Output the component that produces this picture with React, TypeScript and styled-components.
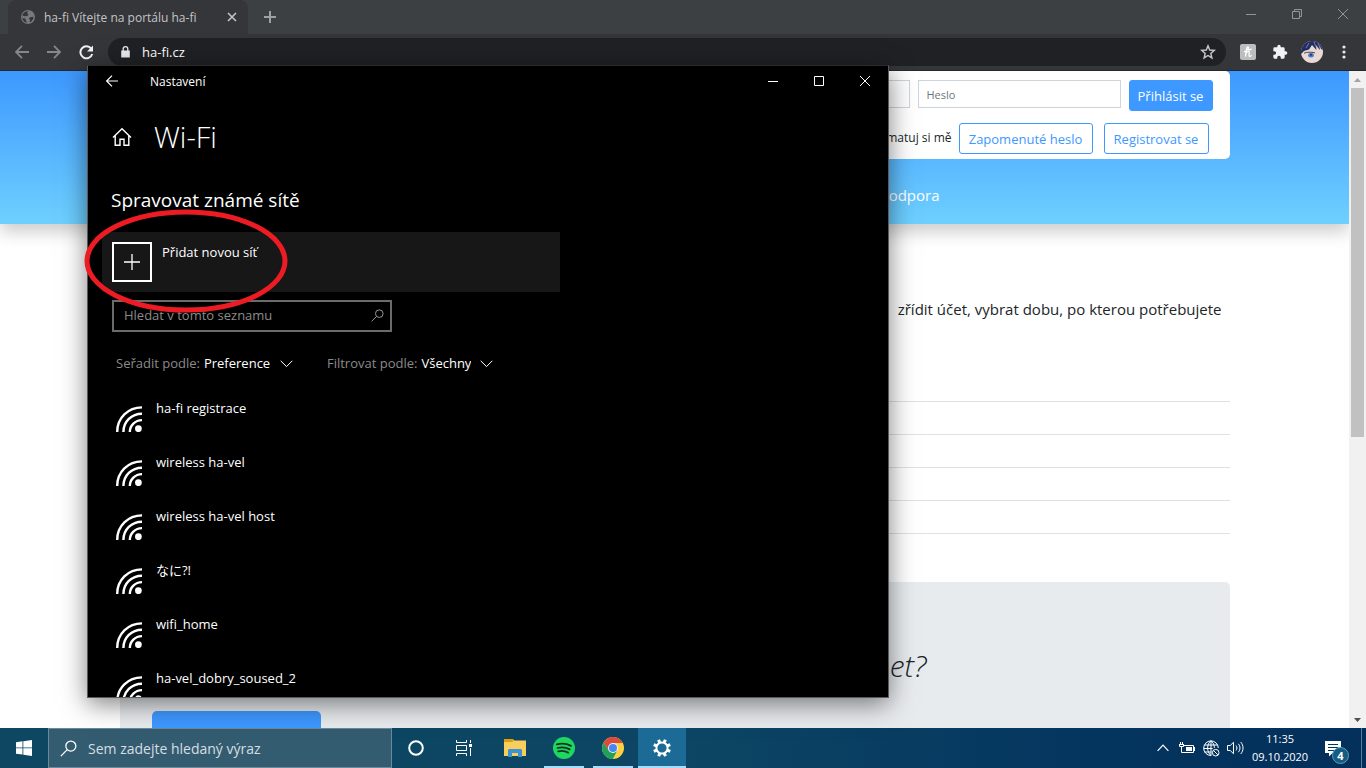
import React from "react";
import styled, { createGlobalStyle, css } from "styled-components";

const Global = createGlobalStyle`
  * { box-sizing: border-box; }
  html, body { margin: 0; padding: 0; }
  body, button, input, select {
    font-family: "Segoe UI", "Open Sans", "Noto Sans", "Noto Sans CJK JP", sans-serif;
  }
  button { border: 0; padding: 0; background: none; color: inherit; cursor: pointer; }
  svg { display: block; flex: none; }
`;

const Desktop = styled.div`
  position: relative;
  height: 100vh;
  display: flex;
  flex-direction: column;
  overflow: hidden;
`;

/* ---------- browser ---------- */

const Browser = styled.section`
  flex: 1;
  min-height: 0;
  display: flex;
  flex-direction: column;
  background: #3c4043;
`;

const TabStrip = styled.div`
  height: 34px;
  flex: none;
  display: flex;
  padding-left: 8px;
  color: #9fa1a4;
`;

const Tab = styled.div`
  width: 240px;
  height: 34px;
  display: flex;
  align-items: center;
  padding: 0 9px 0 13px;
  gap: 9px;
  background: #35363a;
  border-radius: 8px 8px 0 0;
  color: #c3c5c8;
  font-size: 12px;
`;

const TabTitle = styled.span`
  flex: 1;
  white-space: nowrap;
`;

const NewTab = styled.button`
  width: 44px;
  height: 34px;
  display: grid;
  place-items: center;
`;

const Captions = styled.div<{ $color: string; $height: number }>`
  display: flex;
  margin-left: auto;
  color: ${(p) => p.$color};
  button {
    width: 46px;
    height: ${(p) => p.$height}px;
    display: grid;
    place-items: center;
  }
`;

const Toolbar = styled.div`
  height: 37px;
  flex: none;
  display: flex;
  align-items: center;
  padding: 0 6px;
  background: #35363a;
  border-bottom: 1px solid #27282b;
`;

const ToolButton = styled.button<{ $color?: string }>`
  width: 32px;
  height: 32px;
  display: grid;
  place-items: center;
  color: ${(p) => p.$color ?? "#f1f3f4"};
`;

const Omnibox = styled.div`
  flex: 1;
  height: 28px;
  margin: 0 6px;
  padding: 0 10px 0 13px;
  display: flex;
  align-items: center;
  gap: 12px;
  background: #202124;
  border-radius: 14px;
  color: #fff;
  input {
    flex: 1;
    border: 0;
    padding: 0;
    background: none;
    color: #fff;
    font-size: 13px;
    outline: 0;
  }
`;

const Viewport = styled.div`
  flex: 1;
  min-height: 0;
  display: flex;
  background: #fff;
`;

const Page = styled.div`
  flex: 1;
  min-width: 0;
  overflow: hidden;
  color: #212529;
`;

const Container = styled.div`
  max-width: 1140px;
  margin: 0 auto;
  padding: 0 15px;
`;

const SiteHeader = styled.header`
  height: 153px;
  background: linear-gradient(#3d98ff, #6ed0ff);
  box-shadow: 0 8px 16px rgba(0, 0, 0, 0.2);
`;

const Login = styled.form`
  width: 560px;
  height: 88px;
  margin-left: auto;
  padding: 9px 17px 0 0;
  display: flex;
  flex-direction: column;
  gap: 12px;
  background: #fff;
  border-radius: 5px;
`;

const LoginRow = styled.div<{ $gap: number; $inset?: number }>`
  height: 31px;
  display: flex;
  align-items: center;
  justify-content: flex-end;
  gap: ${(p) => p.$gap}px;
  padding-right: ${(p) => p.$inset ?? 0}px;
`;

const LoginInput = styled.input`
  width: 203px;
  height: 28px;
  margin-bottom: 3px;
  padding: 0 8px;
  border: 1px solid #ced4da;
  font-size: 11px;
  &::placeholder { color: #6c757d; }
`;

const Remember = styled.label`
  display: flex;
  align-items: center;
  gap: 4px;
  margin: 0 -4px 3px 0;
  font-size: 12px;
  white-space: nowrap;
`;

const SiteButton = styled.button<{ $solid?: boolean; $width: number }>`
  width: ${(p) => p.$width}px;
  height: 31px;
  border: 1px solid #3d98ff;
  border-radius: 3px;
  font-size: 13px;
  white-space: nowrap;
  ${(p) =>
    p.$solid
      ? css`background: #3d98ff; color: #fff; font-weight: 500;`
      : css`background: #fff; color: #3d98ff;`}
`;

const SiteNav = styled.nav`
  max-width: 530px;
  margin: 0 auto;
  padding-top: 24px;
  display: flex;
  justify-content: flex-end;
  a {
    color: #fff;
    font-size: 15px;
    font-weight: 500;
    line-height: 24px;
    text-decoration: none;
  }
`;

const Lead = styled.p`
  margin: 73px 8px 48px 0;
  font-size: 15px;
  line-height: 24px;
  text-align: right;
`;

const Rules = styled.div`
  margin-bottom: 48px;
`;

const Rule = styled.div`
  height: 33px;
  border-bottom: 1px solid #dee2e6;
`;

const Jumbotron = styled.section`
  min-height: 260px;
  padding: 64px 32px;
  background: #e8ebee;
  border-radius: 5px;
`;

const Question = styled.h2`
  max-width: 504px;
  margin: 0 auto 25px;
  font-family: "Segoe UI", "Open Sans", sans-serif;
  font-size: 30px;
  font-style: italic;
  font-weight: 300;
  line-height: 40px;
  text-align: right;
`;

const BigButton = styled.button`
  width: 169px;
  height: 48px;
  background: #3d98ff;
  border-radius: 5px;
`;

const Scrollbar = styled.div`
  width: 17px;
  flex: none;
  display: flex;
  flex-direction: column;
  align-items: center;
  background: #f1f1f1;
`;

const ScrollArrow = styled.button<{ $color: string }>`
  width: 17px;
  height: 17px;
  display: grid;
  place-items: center;
  color: ${(p) => p.$color};
`;

const Track = styled.div`
  flex: 1;
  width: 13px;
`;

const Thumb = styled.div`
  height: 56%;
  background: #c1c1c1;
`;

/* ---------- settings window ---------- */

const Settings = styled.section`
  position: absolute;
  left: 87px;
  top: 65px;
  width: 802px;
  height: 633px;
  overflow: hidden;
  background: #000;
  border: 1px solid #5a5a5a;
  border-top-color: #2b2c2d;
  color: #fff;
  box-shadow: 0 6px 24px rgba(0, 0, 0, 0.5);
`;

const TitleBar = styled.div`
  display: flex;
  align-items: center;
  font-size: 12px;
`;

const Back = styled.button`
  width: 48px;
  height: 30px;
  margin-right: 14px;
  display: grid;
  place-items: center;
`;

const SettingsBody = styled.div`
  padding: 19px 24px 0;
`;

const Heading = styled.div`
  display: flex;
  align-items: center;
  gap: 22px;
  height: 44px;
  h1 {
    margin: 0;
    font-size: 29px;
    font-weight: 300;
    line-height: 40px;
  }
`;

const Section = styled.h2`
  margin: 27px 0 18px -1px;
  font-size: 19px;
  font-weight: 400;
  line-height: 28px;
`;

const AddNetwork = styled.button`
  width: 458px;
  height: 60px;
  margin-left: -10px;
  padding: 10px;
  display: flex;
  align-items: flex-start;
  gap: 10px;
  background: #171717;
  font-size: 13px;
  line-height: 20px;
`;

const PlusBox = styled.span`
  width: 40px;
  height: 40px;
  display: grid;
  place-items: center;
  border: 2px solid #fff;
`;

const SearchBox = styled.label`
  width: 280px;
  height: 32px;
  margin-top: 8px;
  padding: 0 6px 2px 10px;
  display: flex;
  align-items: center;
  border: 2px solid #6b6b6b;
  color: #9a9a9a;
  input {
    flex: 1;
    min-width: 0;
    padding: 0;
    border: 0;
    background: none;
    color: #fff;
    font-size: 13px;
    outline: 0;
  }
  input::placeholder { color: #8b8b8b; }
`;

const Filters = styled.div`
  display: flex;
  gap: 34px;
  margin: 21px 0 19px 4px;
`;

const Filter = styled.label`
  display: flex;
  align-items: center;
  gap: 4px;
  color: #8b8b8b;
  font-size: 13px;
  line-height: 20px;
`;

const Picker = styled.span`
  display: grid;
  align-items: center;
  color: #fff;
  select, svg { grid-area: 1 / 1; }
  select {
    appearance: none;
    border: 0;
    padding: 0 22px 0 0;
    background: none;
    color: #fff;
    font-size: 13px;
    line-height: 20px;
  }
  svg { justify-self: end; pointer-events: none; }
`;

const Networks = styled.ul`
  list-style: none;
  margin: 0;
  padding: 0;
`;

const Network = styled.li`
  height: 54px;
  padding-left: 4px;
  display: flex;
  gap: 14px;
  font-size: 13px;
  line-height: 20px;
  svg { margin-top: 14px; }
  span { margin-top: 6px; }
`;

const Ring = styled.svg`
  position: absolute;
  left: 81px;
  top: 204px;
  pointer-events: none;
`;

/* ---------- taskbar ---------- */

const Taskbar = styled.footer`
  height: 40px;
  flex: none;
  display: flex;
  background: linear-gradient(90deg, #0d4762 0%, #0d4664 50%, #04355f 80%, #03305b 100%);
  color: #fff;
`;

const TaskButton = styled.button<{ $line?: number; $active?: boolean }>`
  position: relative;
  width: 48px;
  height: 40px;
  display: grid;
  place-items: center;
  background: ${(p) => (p.$active ? "#1c6b96" : "none")};
  &::after {
    content: "";
    position: absolute;
    bottom: 0;
    left: calc(50% - ${(p) => (p.$line ?? 0) / 2}px);
    width: ${(p) => p.$line ?? 0}px;
    height: 2px;
    background: #a6dcfb;
  }
`;

const TaskSearch = styled.label`
  width: 344px;
  display: flex;
  align-items: center;
  gap: 11px;
  padding: 0 11px;
  background: #345c70;
  border: 1px solid #6b8998;
  input {
    flex: 1;
    min-width: 0;
    padding: 0;
    border: 0;
    background: none;
    font-size: 14px;
    outline: 0;
  }
  input::placeholder { color: #d5dee3; }
`;

const Apps = styled.div`
  display: flex;
  gap: 1px;
  margin-left: 3px;
`;

const Tray = styled.div`
  display: flex;
  margin-left: auto;
`;

const TrayButton = styled.button<{ $width?: number }>`
  position: relative;
  width: ${(p) => p.$width ?? 24}px;
  display: grid;
  place-items: center;
`;

const Clock = styled.time`
  width: 66px;
  display: flex;
  flex-direction: column;
  justify-content: center;
  text-align: center;
  font-size: 11px;
  line-height: 18px;
`;

const Badge = styled.span`
  position: absolute;
  left: 19px;
  top: 19px;
  width: 17px;
  height: 17px;
  border-radius: 50%;
  border: 1px solid #5f9dbb;
  background: #135d84;
  font-size: 11px;
  font-weight: 700;
  line-height: 15px;
`;

const ShowDesktop = styled.button`
  width: 5px;
  border-left: 1px solid #5a7c99;
`;

/* ---------- drawings ---------- */

const stroke = { fill: "none", stroke: "currentColor" } as const;

const Magnifier = ({ size }: { size: number }) => (
  <svg width={size} height={size} viewBox="0 0 16 16" {...stroke} strokeWidth="1.2">
    <circle cx="10.2" cy="5.7" r="4.7" />
    <path d="M6.8 9.1 0.8 15.2" />
  </svg>
);

const Chevron = () => (
  <svg width="13" height="13" viewBox="0 0 13 13" {...stroke} strokeWidth="1">
    <path d="M.7 3.800 6.500 9.600 12.300 3.800" />
  </svg>
);

const WifiIcon = () => (
  <svg width="26" height="26" viewBox="0 0 26 26" {...stroke} strokeWidth="2.4">
    <path d="M1.2 26C1.2 12 12 1.4 26 1.4M7.4 26C7.4 15.6 15.6 7.7 26 7.7M13.8 26C13.8 19.4 19.2 14.1 26 14.1" />
    <circle cx="22.4" cy="22.7" r="3.4" fill="currentColor" stroke="none" />
  </svg>
);

const Minimize = () => (
  <svg width="10" height="10" {...stroke}><path d="M0 5.5h10" /></svg>
);
const Cross = () => (
  <svg width="10" height="10" {...stroke}><path d="M0 0l10 10M10 0 0 10" /></svg>
);

const networks = [
  "ha-fi registrace",
  "wireless ha-vel",
  "wireless ha-vel host",
  "なに?!",
  "wifi_home",
  "ha-vel_dobry_soused_2",
];

function BrowserWindow() {
  return (
    <Browser>
      <TabStrip>
        <Tab>
          <svg width="14" height="14" viewBox="0 0 14 14">
            <circle cx="7" cy="7" r="7" fill="#777a7d" />
            <path d="M7.4 1.2 6 3l1.6 1.5L6.3 6 3.7 6.2 1.4 5.5 1.2 8l3 .4.7 1.6 1 2.8-2.2-.8A6 6 0 0 1 3 2.6 6 6 0 0 1 7.4 1.2ZM9 7.2l3.7-.5-.6 2.4-1.9 2.7-1.5.4.4-2.3L8 8.7Z" fill="#35363a" />
          </svg>
          <TabTitle>ha-fi Vítejte na portálu ha-fi</TabTitle>
          <button aria-label="Zavřít kartu">
            <svg width="14" height="14" {...stroke} strokeWidth="1.6"><path d="M3 3l8 8M11 3l-8 8" /></svg>
          </button>
        </Tab>
        <NewTab aria-label="Nová karta">
          <svg width="12" height="12" {...stroke} strokeWidth="2"><path d="M6 0v12M0 6h12" /></svg>
        </NewTab>
        <Captions $color="#929598" $height={28}>
          <button aria-label="Minimalizovat"><Minimize /></button>
          <button aria-label="Obnovit">
            <svg width="10" height="10" {...stroke}><path d="M.5 2.500h7v7h-7ZM2.500 2.500v-2h7v7h-2" /></svg>
          </button>
          <button aria-label="Zavřít"><Cross /></button>
        </Captions>
      </TabStrip>
      <Toolbar>
        <ToolButton $color="#85878a" aria-label="Zpět">
          <svg width="14" height="14" {...stroke} strokeWidth="1.8"><path d="M14 7H1.5M7 .9.9 7 7 13.1" /></svg>
        </ToolButton>
        <ToolButton $color="#85878a" aria-label="Vpřed">
          <svg width="14" height="14" {...stroke} strokeWidth="1.8"><path d="M0 7h12.5M7 .9 13.1 7 7 13.1" /></svg>
        </ToolButton>
        <ToolButton aria-label="Načíst znovu">
          <svg width="15" height="15" {...stroke} strokeWidth="2">
            <path d="M12.2 3.6A6 6 0 1 0 13.2 9" />
            <path d="M14 .6v6H8Z" fill="currentColor" stroke="none" />
          </svg>
        </ToolButton>
        <Omnibox>
          <svg width="9" height="12" viewBox="0 0 9 12" {...stroke} strokeWidth="1.3">
            <path d="M.2 4.5h8.6v7H.2Z" fill="#e8eaed" stroke="none" />
            <path d="M2.2 5V3a2.3 2.3 0 0 1 4.6 0v2" stroke="#e8eaed" />
          </svg>
          <input aria-label="Adresa" defaultValue="ha-fi.cz" />
          <svg width="16" height="16" viewBox="0 0 16 16" {...stroke} strokeWidth="1.4">
            <path d="M8 1.8 9.7 6l4.6.4-3.5 3 1.1 4.5L8 11.5 4.1 13.9l1.1-4.5-3.5-3L6.3 6Z" stroke="#c7c9cc" />
          </svg>
        </Omnibox>
        <ToolButton aria-label="Honey">
          <svg width="16" height="16" viewBox="0 0 16 16">
            <rect width="16" height="16" rx="2" fill="#bdbdbd" />
            <path d="M4 7.8C6.400 6.800 9 4.800 8.400 3.300 8 2.400 6.900 3 6.600 4.700L5.400 12.600M5.800 9.600C7 7.500 9 6.600 9.200 8.100 9.300 9.300 8.600 12.500 9.700 12.500c.7 0 1.400-.7 1.900-1.500M8.300 6l3.400-.9" fill="none" stroke="#fff" strokeWidth="1.3" />
          </svg>
        </ToolButton>
        <ToolButton aria-label="Rozšíření">
          <svg width="16" height="16" viewBox="0 0 24 24" fill="#f1f3f4">
            <path d="M20.5 11H19V7a2 2 0 0 0-2-2h-4V3.500a2.500 2.500 0 0 0-5 0V5H4a2 2 0 0 0-2 2v3.800h1.500a2.700 2.700 0 0 1 0 5.400H2V20a2 2 0 0 0 2 2h3.800v-1.500a2.700 2.700 0 0 1 5.400 0V22H17a2 2 0 0 0 2-2v-4h1.500a2.500 2.500 0 0 0 0-5Z" />
          </svg>
        </ToolButton>
        <ToolButton aria-label="Profil">
          <svg width="22" height="22" viewBox="0 0 22 22">
            <clipPath id="face"><circle cx="11" cy="11" r="11" /></clipPath>
            <g clipPath="url(#face)">
              <rect width="22" height="22" fill="#e9d8d3" />
              <path d="M0 0h22v9l-2-1-1.500-4 .3 5L15 4l.4 5L11 4 8 8.500 3 10l-3 3Z" fill="#232e62" />
              <path d="M13 1l2 5M17 2l2 5M8 2 5 7" stroke="#8793c4" strokeWidth=".8" />
              <path d="M3 12.200c3-1.400 7-1.200 11-.4" fill="none" stroke="#4b4558" strokeWidth="1" />
              <ellipse cx="10" cy="14.200" rx="2.800" ry="2.200" fill="#4a78c4" />
              <circle cx="10" cy="13.800" r="1" fill="#22356e" />
            </g>
          </svg>
        </ToolButton>
        <ToolButton aria-label="Nabídka">
          <svg width="4" height="14" fill="#e8eaed">
            <circle cx="2" cy="2" r="1.6" /><circle cx="2" cy="7" r="1.6" /><circle cx="2" cy="12" r="1.6" />
          </svg>
        </ToolButton>
      </Toolbar>
      <Viewport>
        <Page>
          <SiteHeader>
            <Container>
              <Login>
                <LoginRow $gap={8}>
                  <LoginInput aria-label="Uživatelské jméno" />
                  <LoginInput type="password" aria-label="Heslo" placeholder="Heslo" />
                  <SiteButton type="button" $solid $width={84}>Přihlásit se</SiteButton>
                </LoginRow>
                <LoginRow $gap={11} $inset={4}>
                  <Remember><input type="checkbox" />Pamatuj si mě</Remember>
                  <SiteButton type="button" $width={134}>Zapomenuté heslo</SiteButton>
                  <SiteButton type="button" $width={105}>Registrovat se</SiteButton>
                </LoginRow>
              </Login>
              <SiteNav><a href="#podpora">Podpora</a></SiteNav>
            </Container>
          </SiteHeader>
          <Container as="main">
            <Lead>zřídit účet, vybrat dobu, po kterou potřebujete</Lead>
            <Rules>
              {[0, 1, 2, 3, 4].map((n) => <Rule key={n} />)}
            </Rules>
            <Jumbotron>
              <Question>internet?</Question>
              <BigButton aria-label="Registrovat" />
            </Jumbotron>
          </Container>
        </Page>
        <Scrollbar>
          <ScrollArrow $color="#a3a3a3" aria-label="Nahoru">
            <svg width="7" height="4" fill="currentColor"><path d="M0 4 3.5 0 7 4Z" /></svg>
          </ScrollArrow>
          <Track><Thumb /></Track>
          <ScrollArrow $color="#505050" aria-label="Dolů">
            <svg width="7" height="4" fill="currentColor"><path d="M0 0 3.5 4 7 0Z" /></svg>
          </ScrollArrow>
        </Scrollbar>
      </Viewport>
    </Browser>
  );
}

function SettingsWindow() {
  return (
    <Settings>
      <TitleBar>
        <Back aria-label="Zpět">
          <svg width="12" height="12" {...stroke} strokeWidth="1.2"><path d="M12 6H.8M6 .6.6 6 6 11.4" /></svg>
        </Back>
        Nastavení
        <Captions $color="#fff" $height={30}>
          <button aria-label="Minimalizovat"><Minimize /></button>
          <button aria-label="Maximalizovat">
            <svg width="10" height="10" {...stroke}><path d="M.5.5h9v9h-9Z" /></svg>
          </button>
          <button aria-label="Zavřít"><Cross /></button>
        </Captions>
      </TitleBar>
      <SettingsBody>
        <Heading>
          <svg width="20" height="20" viewBox="0 0 20 20" {...stroke} strokeWidth="1.4">
            <path d="M1 10.500 10 1.800l9 8.700M3.200 8.700v9.500H8v-6h4v6h4.800V8.700" />
          </svg>
          <h1>Wi-Fi</h1>
        </Heading>
        <Section>Spravovat známé sítě</Section>
        <AddNetwork>
          <PlusBox>
            <svg width="16" height="16" {...stroke} strokeWidth="1.3"><path d="M8 0v16M0 8h16" /></svg>
          </PlusBox>
          Přidat novou síť
        </AddNetwork>
        <SearchBox>
          <input aria-label="Hledat v tomto seznamu" placeholder="Hledat v tomto seznamu" />
          <Magnifier size={13} />
        </SearchBox>
        <Filters>
          <Filter>
            Seřadit podle:
            <Picker><select><option>Preference</option></select><Chevron /></Picker>
          </Filter>
          <Filter>
            Filtrovat podle:
            <Picker><select><option>Všechny</option></select><Chevron /></Picker>
          </Filter>
        </Filters>
        <Networks>
          {networks.map((name) => (
            <Network key={name}><WifiIcon /><span>{name}</span></Network>
          ))}
        </Networks>
      </SettingsBody>
    </Settings>
  );
}

function SystemTaskbar() {
  return (
    <Taskbar>
      <TaskButton aria-label="Start">
        <svg width="16" height="16" viewBox="0 0 16 16" fill="#fff">
          <path d="M0 2.2 6.5 1.3v6.2H0ZM7.3 1.2 16 0v7.5H7.3ZM0 8.3h6.5v6.3L0 13.7ZM7.3 8.3H16V16l-8.7-1.3Z" />
        </svg>
      </TaskButton>
      <TaskSearch>
        <Magnifier size={17} />
        <input aria-label="Hledat" placeholder="Sem zadejte hledaný výraz" />
      </TaskSearch>
      <TaskButton aria-label="Cortana">
        <svg width="16" height="16" {...stroke} strokeWidth="2"><circle cx="8" cy="8" r="6.8" /></svg>
      </TaskButton>
      <TaskButton aria-label="Zobrazení úkolů">
        <svg width="16" height="16" {...stroke}>
          <path d="M.5 0v2.500h10V0M.5 16v-2.500h10V16M.5 5.500h10v5H.5ZM14.500 0v3M14.500 8v8" />
          <path d="M13 4h3v3h-3Z" fill="#fff" stroke="none" />
        </svg>
      </TaskButton>
      <Apps>
        <TaskButton aria-label="Průzkumník souborů">
          <svg width="22" height="18" viewBox="0 0 22 18">
            <path d="M0 0h9l1 1.500H22V17H0Z" fill="#f8cf5c" />
            <path d="M0 0h8.500l1 1.500L8.500 3H0Z" fill="#e29d0d" />
            <path d="M4 18v-7l1-1h12l1 1v7h-4v-4H8v4Z" fill="#3c93d3" />
            <path d="M8 17v-3h6v3" fill="#f8cf5c" />
          </svg>
        </TaskButton>
        <TaskButton $line={40} aria-label="Spotify">
          <svg width="22" height="22" viewBox="0 0 22 22">
            <circle cx="11" cy="11" r="11" fill="#1ed760" />
            <path d="M3.8 7.4c4.8-1.4 10-.9 14.2 1.5M4.5 11c4.200-1.200 8.600-.7 12.200 1.400M5.200 14.400c3.500-.9 7-.5 10 1.200" fill="none" stroke="#123420" strokeWidth="1.8" strokeLinecap="round" />
          </svg>
        </TaskButton>
        <TaskButton $line={40} aria-label="Chrome">
          <svg width="22" height="22" viewBox="0 0 22 22">
            <circle cx="11" cy="11" r="11" fill="#fdd03f" />
            <path d="M1.500 5.500A11 11 0 0 1 20.500 5.500L21 6H11L6.700 13.500Z" fill="#df4a3c" />
            <path d="M1.500 5.500 6.700 13.500 11 16l4.300-2.500L10.800 22A11 11 0 0 1 1.500 5.500Z" fill="#20a05a" />
            <circle cx="11" cy="11" r="5" fill="#eef2f7" />
            <circle cx="11" cy="11" r="4" fill="#4787f3" />
          </svg>
        </TaskButton>
        <TaskButton $line={48} $active aria-label="Nastavení">
          <svg width="18" height="18" viewBox="0 0 18 18" {...stroke} strokeWidth="2">
            <circle cx="9" cy="9" r="5.6" />
            {[0, 45, 90, 135, 180, 225, 270, 315].map((a) => (
              <path key={a} d="M9 3.400V.1" strokeWidth="3" transform={`rotate(${a + 22} 9 9)`} />
            ))}
          </svg>
        </TaskButton>
      </Apps>
      <Tray>
        <TrayButton aria-label="Skryté ikony">
          <svg width="12" height="8" {...stroke} strokeWidth="1.2"><path d="M.6 6.800 6 1.200l5.400 5.600" /></svg>
        </TrayButton>
        <TrayButton aria-label="Baterie">
          <svg width="16" height="12" viewBox="0 0 16 12" {...stroke}>
            <path d="M5 3.500h9.500v7H4" />
            <path d="M7 5h6v4H7ZM15 5h1v4h-1Z" fill="#fff" stroke="none" />
            <path d="M1.500 0v2M3.500 0v2M0 2.500h5M.5 2.500v2h4v-2M2.500 5v5.500H5" />
          </svg>
        </TrayButton>
        <TrayButton aria-label="Síť">
          <svg width="17" height="17" viewBox="0 0 17 17" {...stroke}>
            <path d="M8 15.500A7.300 7.300 0 1 1 15.300 8M8 15.500C3.500 12 3.500 4 8 .8c2.200 1.700 3.300 4.200 3.400 7M8 .8v14.500M1.300 5h13.400M.7 8.500h9M1.300 12h7" />
            <circle cx="12.7" cy="12.7" r="3.3" />
            <path d="m10.500 10.500 4.400 4.400" />
          </svg>
        </TrayButton>
        <TrayButton aria-label="Hlasitost">
          <svg width="17" height="14" viewBox="0 0 17 14" {...stroke}>
            <path d="M.5 4.500h2.700L6.500 1.300v11.400L3.200 9.500H.5ZM9 4.500c1.200 1.500 1.200 3.500 0 5M11.300 2.800c2.200 2.500 2.200 5.900 0 8.400M13.700 1c3.100 3.500 3.100 8.500 0 12" />
          </svg>
        </TrayButton>
        <Clock><span>11:35</span><span>09.10.2020</span></Clock>
        <TrayButton $width={48} aria-label="Oznámení">
          <svg width="32" height="17" viewBox="0 0 32 17">
            <path d="M4 1h16v12h-8.500L8 16.500V13H4Z" fill="#fff" />
            <path d="M7 4.500h10M7 7.500h10M7 10.500h7" stroke="#04355f" />
          </svg>
          <Badge>4</Badge>
        </TrayButton>
        <ShowDesktop aria-label="Zobrazit plochu" />
      </Tray>
    </Taskbar>
  );
}

export default function App() {
  return (
    <Desktop>
      <Global />
      <BrowserWindow />
      <SettingsWindow />
      <Ring width="210" height="114" fill="none" stroke="#ed1c24" strokeWidth="5">
        <ellipse cx="105" cy="57" rx="99" ry="49" />
      </Ring>
      <SystemTaskbar />
    </Desktop>
  );
}
